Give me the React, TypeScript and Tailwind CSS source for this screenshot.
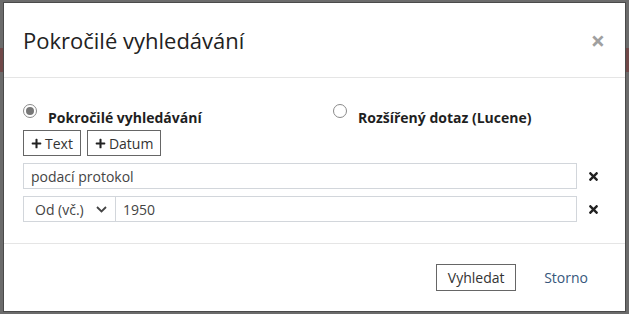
import { FaPlus, FaTimes } from "react-icons/fa";

const font = { fontFamily: '"Open Sans", "Noto Sans", sans-serif' };

function Radio({ checked, label }: { checked?: boolean; label: string }) {
  return (
    <label className="flex items-start gap-[11px]">
      <span className="mt-[2px] grid h-[14px] w-[14px] place-items-center rounded-full border border-[#8a8a8a] bg-white">
        {checked && <span className="h-[8px] w-[8px] rounded-full bg-[#777]" />}
      </span>
      <span className="pt-[6px] text-[14px] font-bold leading-[20px] text-[#1f1f1f]">{label}</span>
    </label>
  );
}

export default function App() {
  return (
    <div className="relative h-[314px] w-[629px] overflow-hidden bg-[#6b6b6b]" style={font}>
      {/* page behind the backdrop */}
      <div className="absolute left-0 right-0 top-[48px] h-[24px] bg-[#704848]" />

      <div className="absolute left-[3px] top-[2px] flex h-[310px] w-[623px] flex-col border border-[#4a4a4a] bg-white">
        <div className="flex h-[75px] shrink-0 items-center justify-between border-b border-[#e5e5e5] pl-[19px] pr-[20px]">
          <h4 className="text-[22px] leading-[30px] text-[#222]">Pokročilé vyhledávání</h4>
          <button className="text-[25px] font-bold leading-none text-[#a0a0a0]">×</button>
        </div>

        <div className="flex h-[166px] shrink-0 flex-col border-b border-[#e5e5e5] pl-[19px] pr-[24px] pt-[24px]">
          <div className="flex">
            <div className="w-[310px]">
              <Radio checked label="Pokročilé vyhledávání" />
            </div>
            <Radio label="Rozšířený dotaz (Lucene)" />
          </div>

          <div className="mt-[2px] flex gap-[6px]">
            <button className="flex h-[26px] items-center gap-[3px] border border-[#666] px-[7px] text-[14px] text-[#333]">
              <FaPlus className="text-[11px] text-[#222]" />
              Text
            </button>
            <button className="flex h-[26px] items-center gap-[3px] border border-[#666] px-[7px] text-[14px] text-[#333]">
              <FaPlus className="text-[11px] text-[#222]" />
              Datum
            </button>
          </div>

          <div className="mt-[7px] flex items-center">
            <div className="flex h-[26px] w-[554px] items-center border border-[#d2d6db] px-[7px] text-[14px] text-[#444]">
              podací protokol
            </div>
            <FaTimes className="ml-[10px] text-[13px] text-[#222]" />
          </div>

          <div className="mt-[7px] flex items-center">
            <div className="flex h-[26px] w-[554px]">
              <div className="flex w-[93px] items-center justify-between border border-[#d2d6db] pl-[11px] pr-[8px] text-[14px] text-[#444]">
                Od (vč.)
                <svg width="11" height="7" viewBox="0 0 11 7" fill="none" stroke="#444" strokeWidth="1.8">
                  <path d="M1 1l4.5 4.5L10 1" />
                </svg>
              </div>
              <div className="flex flex-1 items-center border border-l-0 border-[#d2d6db] px-[7px] text-[14px] text-[#444]">
                1950
              </div>
            </div>
            <FaTimes className="ml-[10px] text-[13px] text-[#222]" />
          </div>
        </div>

        <div className="flex flex-1 items-start justify-end gap-[28px] pr-[37px] pt-[20px]">
          <button className="h-[27px] w-[80px] border border-[#666] text-[14px] text-[#333]">Vyhledat</button>
          <button className="h-[27px] text-[14px] text-[#36577c]">Storno</button>
        </div>
      </div>
    </div>
  );
}
